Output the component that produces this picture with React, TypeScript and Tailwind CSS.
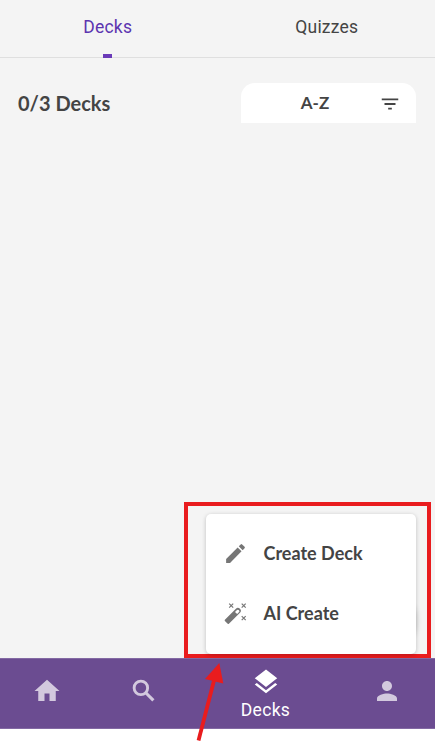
import { MdEdit, MdFilterList, MdHome, MdLayers, MdPerson } from "react-icons/md";

function SearchIcon() {
  return (
    <svg className="size-[30px]" viewBox="0 0 24 24" fill="none" stroke="currentColor" strokeWidth="2.3">
      <circle cx="9.5" cy="9.5" r="5.4" />
      <path d="m13.4 13.4 6.1 6.1" strokeWidth="2.5" />
    </svg>
  );
}

function WandIcon() {
  return (
    <svg className="size-[25px]" viewBox="0 0 25 25" fill="none" stroke="currentColor">
      <path
        fill="currentColor"
        stroke="none"
        fillRule="evenodd"
        d="M1.9 18.8 12.9 7.7a2.9 2.9 0 0 1 4.1 4.1L5.9 22.8a.9.9 0 0 1-1.2 0l-2.8-2.8a.9.9 0 0 1 0-1.2ZM12 11l2.1 2.1 2-2a1.5 1.5 0 0 0-2.1-2.1Z"
      />
      <path
        strokeWidth="1.2"
        d="m6.2 2.7 4 4m0-4-4 4M18.7 2.7l4 4m0-4-4 4M18.7 15.2l4 4m0-4-4 4"
      />
    </svg>
  );
}

function Tabs() {
  return (
    <div className="grid h-[58px] grid-cols-2 border-b border-[#dfdfdf] text-center font-[Roboto,sans-serif] text-[17.5px] leading-[54px] tracking-[0.2px]">
      <div className="flex flex-col items-center pr-[3px] text-[#5c35b0]">
        <span className="h-[54px] pl-px">Decks</span>
        <span className="h-1 w-[9px] shrink-0 bg-[#6a3ab8]" />
      </div>
      <div className="pl-px text-[#444444]">Quizzes</div>
    </div>
  );
}

function Toolbar() {
  return (
    <div className="mt-[25px] flex h-10 items-center justify-between pr-[19px] pl-[18px]">
      <h1 className="pb-px text-[20px] font-bold">0/3 Decks</h1>
      <button className="flex h-10 w-[175px] items-center rounded-t-[14px] bg-white pr-[15px] text-[17px] font-bold">
        <span className="flex-1 pl-[10px]">A-Z</span>
        <MdFilterList className="mt-px size-[22px]" />
      </button>
    </div>
  );
}

function BottomNav() {
  return (
    <nav className="flex h-[71px] shrink-0 border-y border-[#8369a3] bg-[#6b4c91] text-[#d3c9de]">
      <div className="flex w-[93px] justify-center pt-[17px]">
        <MdHome className="size-[30px]" />
      </div>
      <div className="flex w-[102px] justify-center pt-[17px]">
        <SearchIcon />
      </div>
      <div className="flex w-[141px] flex-col items-center pt-2 text-white">
        <MdLayers className="size-[30px]" />
        <span className="font-[Roboto,sans-serif] text-[17.5px] leading-[26px] tracking-[0.3px]">Decks</span>
      </div>
      <div className="flex flex-1 justify-center pt-[17px] pl-[3px]">
        <MdPerson className="size-[30px]" />
      </div>
    </nav>
  );
}

function CreateMenu() {
  return (
    <div className="absolute top-[502px] left-[184px] h-[156px] w-[247px] border-4 border-[#e91c1e] pt-[7.5px] pl-[18px]">
      <div className="flex h-[140px] w-[210px] flex-col rounded-[5px] bg-white pt-[10px] text-[18px] font-bold shadow-[0_1px_4px_rgba(0,0,0,0.22)]">
        <div className="flex h-[60px] items-center gap-[15.5px] pl-[17px]">
          <MdEdit className="size-[25px] text-[#767676]" />
          <span>Create Deck</span>
        </div>
        <div className="flex h-[60px] items-center gap-[15.5px] pl-[17px]">
          <span className="text-[#767676]">
            <WandIcon />
          </span>
          <span>AI Create</span>
        </div>
      </div>
    </div>
  );
}

export default function App() {
  return (
    <div className="relative flex h-[741px] w-[435px] flex-col overflow-hidden bg-white font-[Lato,sans-serif] text-[#444444]">
      <main className="flex-1 bg-[#f4f4f4]">
        <Tabs />
        <Toolbar />
      </main>
      <BottomNav />
      <div className="h-3 shrink-0" />
      <div className="absolute top-[602px] left-[386px] h-[34px] w-[30px] rounded-r-[12px] bg-[#e8e6f0] shadow-[0_2px_6px_rgba(0,0,0,0.2)]" />
      <CreateMenu />
      <svg className="absolute top-[658px] left-[190px] h-[83px] w-[45px]" viewBox="190 658 45 83">
        <path d="m198.5 740.5 15.5-60" stroke="#e91c1e" strokeWidth="3.8" />
        <path d="m219.3 663-14.3 16 18.3 4.5Z" fill="#e91c1e" />
      </svg>
    </div>
  );
}
